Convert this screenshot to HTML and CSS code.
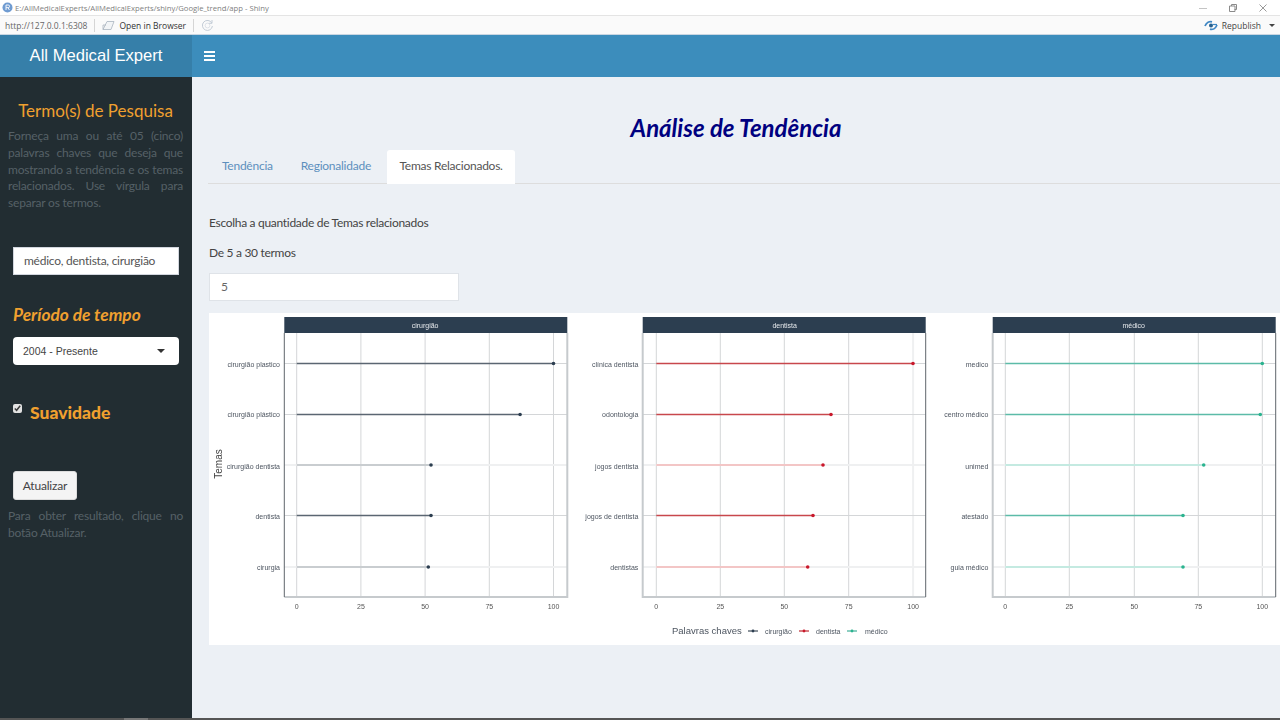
FILE: index.html
```html
<!DOCTYPE html>
<html lang="en">

<head>
    <meta charset="UTF-8">
    <title>All Medical Expert</title>
    <link rel="stylesheet" href="styles.css">
</head>

<body>
    <div class="titlebar">
        <svg class="app-icon" width="11" height="11" viewBox="0 0 11 11">
            <circle cx="5.5" cy="5.5" r="5" fill="#6f9bd1"/>
            <path d="M4 8V3h2.2a1.3 1.3 0 0 1 0 2.7H4M6 5.7 7.4 8" fill="none" stroke="#fff" stroke-width="0.9"/>
        </svg>
        <span class="window-path">E:/AllMedicalExperts/AllMedicalExperts/shiny/Google_trend/app - Shiny</span>
        <div class="window-btns">
            <svg width="10" height="10" viewBox="0 0 10 10"><path d="M1 5.5h8" stroke="#c4c4c4" fill="none"/></svg>
            <svg width="10" height="10" viewBox="0 0 10 10"><path d="M1.5 3h5.500v5.500h-5.500zM3.500 3V1.500h5v5H6.500" stroke="#8a8a8a" fill="none"/></svg>
            <svg width="10" height="10" viewBox="0 0 10 10"><path d="M1.500 1.500l7 7M8.500 1.500l-7 7" stroke="#9a9a9a" fill="none"/></svg>
        </div>
    </div>

    <div class="toolbar">
        <span class="url">http://127.0.0.1:6308</span>
        <span class="tool-sep"></span>
        <svg class="tool-icon" width="13" height="11" viewBox="0 0 13 11">
            <path d="M1 9.500h8l3-8H5z" fill="#f2f4f6" stroke="#a9b4bf" stroke-width="0.8"/>
            <path d="M1 9.500V5h3" fill="none" stroke="#a9b4bf" stroke-width="0.8"/>
        </svg>
        <span class="open-browser">Open in Browser</span>
        <span class="tool-sep"></span>
        <svg class="refresh" width="13" height="13" viewBox="0 0 13 13">
            <path d="M10.800 4a5 5 0 1 0 .6 3M11 1v3.300H7.700" fill="none" stroke="#c3ccd6" stroke-width="1"/>
            <circle cx="6.500" cy="6.500" r="2.400" fill="none" stroke="#d5dbe2" stroke-width="0.8"/>
        </svg>
        <div class="republish">
            <svg width="14" height="11" viewBox="0 0 14 11">
                <path d="M1 6C2.500 2.500 5.500 1 8 1.800" fill="none" stroke="#3f87c4" stroke-width="1.800"/>
                <path d="M13 5C11.500 8.500 8.500 10 6 9.200" fill="none" stroke="#3f87c4" stroke-width="1.800"/>
                <circle cx="7" cy="5.500" r="2" fill="#27618f"/>
                <path d="M8.500 4.500H13" stroke="#3f87c4" stroke-width="1.200"/>
            </svg>
            <span>Republish</span>
            <span class="caret"></span>
        </div>
    </div>

    <header class="main-header">
        <div class="logo">All Medical Expert</div>
        <nav class="navbar">
            <div class="burger"><span></span><span></span><span></span></div>
        </nav>
    </header>

    <div class="wrapper">
        <aside class="sidebar">
            <h3 class="side-title">Termo(s) de Pesquisa</h3>
            <p class="side-text">Forneça uma ou até 05 (cinco) palavras chaves que deseja que mostrando a tendência e os temas relacionados. Use vírgula para separar os termos.</p>
            <input class="side-input" type="text" value="médico, dentista, cirurgião">
            <h4 class="side-label">Período de tempo</h4>
            <div class="side-select">
                <span>2004 - Presente</span>
                <span class="select-caret"></span>
            </div>
            <label class="smooth">
                <input type="checkbox" checked>
                <span>Suavidade</span>
            </label>
            <button class="btn-update">Atualizar</button>
            <p class="side-text side-hint">Para obter resultado, clique no botão Atualizar.</p>
        </aside>

        <main class="content">
            <h2 class="page-title">Análise de Tendência</h2>
            <ul class="tabs">
                <li><a>Tendência</a></li>
                <li><a>Regionalidade</a></li>
                <li class="active"><a>Temas Relacionados.</a></li>
            </ul>
            <p class="field-text first">Escolha a quantidade de Temas relacionados</p>
            <p class="field-text second">De 5 a 30 termos</p>
            <input class="num-input" type="text" value="5">

            <div class="chart-box">
                <svg class="chart" width="1071" height="332" viewBox="0 0 1071 332">
                    <!-- cirurgiao -->
                    <g transform="translate(87.7 4)">
                        <rect class="strip" x="-12.400" y="0" width="283" height="16"/>
                        <text class="strip-text" x="128.400" y="11">cirurgião</text>
                        <path class="grid" d="M0 16V280M64.200 16V280M128.400 16V280M192.600 16V280M256.800 16V280"/>
                        <path class="grid" d="M-12.400 46.500H270.600M-12.400 97.500H270.600M-12.400 198.500H270.600"/>
                        <path class="grid-light" d="M-12.400 148H270.600M-12.400 250H270.600"/>
                        <path class="seg-dark" d="M0 46.500H256.800M0 97.500H223.400M0 198.500H134.300"/>
                        <path class="seg-soft soft-dark" d="M0 148H134.300M0 250H131.600"/>
                        <g class="dot-dark">
                            <circle cx="256.800" cy="46.500" r="1.800"/>
                            <circle cx="223.400" cy="97.500" r="1.800"/>
                            <circle cx="134.300" cy="148" r="1.800"/>
                            <circle cx="134.300" cy="198.500" r="1.800"/>
                            <circle cx="131.600" cy="250" r="1.800"/>
                        </g>
                        <path class="frame-light" d="M270.600 16V280H-12.400"/>
                        <path class="frame-dark" d="M-12.400 16V280"/>
                        <text class="cat" x="-16.700" y="49.500">cirurgião plastico</text>
                        <text class="cat" x="-16.700" y="100">cirurgião plástico</text>
                        <text class="cat" x="-16.700" y="151.500">cirurgião dentista</text>
                        <text class="cat" x="-16.700" y="202">dentista</text>
                        <text class="cat" x="-16.700" y="253">cirurgia</text>
                        <text class="tick" x="0" y="291.500">0</text>
                        <text class="tick" x="64.200" y="291.500">25</text>
                        <text class="tick" x="128.400" y="291.500">50</text>
                        <text class="tick" x="192.600" y="291.500">75</text>
                        <text class="tick" x="256.800" y="291.500">100</text>
                    </g>
                    <!-- dentista -->
                    <g transform="translate(447.3 4)">
                        <rect class="strip" x="-13.600" y="0" width="283" height="16"/>
                        <text class="strip-text" x="128.400" y="11">dentista</text>
                        <path class="grid" d="M0 16V280M64 16V280M128 16V280M192.400 16V280"/>
                        <path class="grid-light" d="M256.800 16V280"/>
                        <path class="grid" d="M-13.600 46.500H269.400M-13.600 97.500H269.400M-13.600 198.500H269.400"/>
                        <path class="grid-light" d="M-13.600 148H269.400M-13.600 250H269.400"/>
                        <path class="seg-red" d="M0 46.500H256.700M0 97.500H174.700M0 198.500H156.700"/>
                        <path class="seg-soft soft-red" d="M0 148H166.700M0 250H151.400"/>
                        <g class="dot-red">
                            <circle cx="256.700" cy="46.500" r="1.800"/>
                            <circle cx="174.700" cy="97.500" r="1.800"/>
                            <circle cx="166.700" cy="148" r="1.800"/>
                            <circle cx="156.700" cy="198.500" r="1.800"/>
                            <circle cx="151.400" cy="250" r="1.800"/>
                        </g>
                        <path class="frame-light" d="M-13.600 16V280H269.400"/>
                        <path class="frame-dark" d="M269.400 16V280"/>
                        <text class="cat" x="-18" y="49.500">clínica dentista</text>
                        <text class="cat" x="-18" y="100">odontologia</text>
                        <text class="cat" x="-18" y="151.500">jogos dentista</text>
                        <text class="cat" x="-18" y="202">jogos de dentista</text>
                        <text class="cat" x="-18" y="253">dentistas</text>
                        <text class="tick" x="0" y="291.500">0</text>
                        <text class="tick" x="64" y="291.500">25</text>
                        <text class="tick" x="128" y="291.500">50</text>
                        <text class="tick" x="192.400" y="291.500">75</text>
                        <text class="tick" x="256.800" y="291.500">100</text>
                    </g>
                    <!-- medico -->
                    <g transform="translate(796.3 4)">
                        <rect class="strip" x="-12.600" y="0" width="283" height="16"/>
                        <text class="strip-text" x="128.400" y="11">médico</text>
                        <path class="grid" d="M0 16V280M64 16V280M129 16V280M193 16V280M257 16V280"/>
                        <path class="grid" d="M-12.600 46.500H270.400M-12.600 97.500H270.400M-12.600 198.500H270.400"/>
                        <path class="grid-light" d="M-12.600 148H270.400M-12.600 250H270.400"/>
                        <path class="seg-teal" d="M0 46.500H257M0 97.500H255M0 198.500H177.700"/>
                        <path class="seg-soft soft-teal" d="M0 148H198.400M0 250H177.700"/>
                        <g class="dot-teal">
                            <circle cx="257" cy="46.500" r="1.800"/>
                            <circle cx="255" cy="97.500" r="1.800"/>
                            <circle cx="198.400" cy="148" r="1.800"/>
                            <circle cx="177.700" cy="198.500" r="1.800"/>
                            <circle cx="177.700" cy="250" r="1.800"/>
                        </g>
                        <path class="frame-light" d="M-12.600 16V280H270.400"/>
                        <path class="frame-dark" d="M270.400 16V280"/>
                        <text class="cat" x="-17" y="49.500">medico</text>
                        <text class="cat" x="-17" y="100">centro médico</text>
                        <text class="cat" x="-17" y="151.500">unimed</text>
                        <text class="cat" x="-17" y="202">atestado</text>
                        <text class="cat" x="-17" y="253">guia médico</text>
                        <text class="tick" x="0" y="291.500">0</text>
                        <text class="tick" x="64" y="291.500">25</text>
                        <text class="tick" x="129" y="291.500">50</text>
                        <text class="tick" x="193" y="291.500">75</text>
                        <text class="tick" x="257" y="291.500">100</text>
                    </g>
                    <!-- eixo e legenda -->
                    <text class="axis-title" transform="translate(12.500 151) rotate(-90)">Temas</text>
                    <text class="legend-title" x="463" y="321">Palavras chaves</text>
                    <path class="seg-dark" d="M539 318H549"/>
                    <circle class="dot-dark" cx="544" cy="318" r="1.400"/>
                    <text class="legend-text" x="556" y="320.500">cirurgião</text>
                    <path class="seg-red" d="M590 318H600"/>
                    <circle class="dot-red" cx="595" cy="318" r="1.400"/>
                    <text class="legend-text" x="607" y="320.500">dentista</text>
                    <path class="seg-teal" d="M638 318H648"/>
                    <circle class="dot-teal" cx="643" cy="318" r="1.400"/>
                    <text class="legend-text" x="656" y="320.500">médico</text>
                </svg>
            </div>
        </main>
    </div>

    <div class="taskbar"><span></span></div>
</body>
</html>
```

FILE: styles.css
```css
* {
    box-sizing: border-box;
}

html,
body {
    height: 100%;
}

body {
    margin: 0;
    font-family: Lato, 'Open Sans', sans-serif;
    color: #444;
    background-color: #ecf0f5;
    display: flex;
    flex-direction: column;
    overflow: hidden;
}

/* window chrome */
.titlebar {
    height: 16px;
    flex: none;
    background-color: #fff;
    border-bottom: 1px solid #e4e4e4;
    display: flex;
    align-items: center;
    padding-left: 2px;
}

.app-icon {
    margin-right: 2px;
}

.window-path {
    font-family: 'Open Sans', sans-serif;
    font-size: 7.700px;
    color: #808080;
}

.window-btns {
    margin-left: auto;
    display: flex;
    gap: 20px;
    padding-right: 12px;
}

.toolbar {
    height: 19px;
    flex: none;
    background-color: #fafafa;
    border-bottom: 1px solid #c9d6e2;
    display: flex;
    align-items: center;
    padding-left: 5px;
    font-family: 'Open Sans', sans-serif;
    font-size: 8.500px;
}

.url {
    color: #666;
}

.tool-sep {
    width: 1px;
    height: 13px;
    background-color: #d5d5d5;
    margin: 0 7px;
}

.tool-icon {
    margin-right: 4px;
}

.open-browser {
    color: #333;
}

.republish {
    margin-left: auto;
    display: flex;
    align-items: center;
    gap: 4px;
    padding-right: 5px;
    color: #444;
}

.caret {
    width: 0;
    height: 0;
    margin-left: 4px;
    border-left: 3px solid transparent;
    border-right: 3px solid transparent;
    border-top: 3px solid #444;
}

/* header */
.main-header {
    height: 42px;
    flex: none;
    display: flex;
}

.logo {
    width: 192px;
    background-color: #367fa9;
    color: #fff;
    font-family: 'Liberation Sans', sans-serif;
    font-size: 16.600px;
    line-height: 42px;
    text-align: center;
}

.navbar {
    flex: 1;
    background-color: #3c8dbc;
    display: flex;
    align-items: center;
    padding-left: 12px;
}

.burger {
    width: 11px;
    display: flex;
    flex-direction: column;
    gap: 2px;
}

.burger span {
    height: 2px;
    background-color: #fff;
}

.wrapper {
    flex: 1;
    display: flex;
    min-height: 0;
}

/* sidebar */
.sidebar {
    width: 192px;
    flex: none;
    background-color: #222d32;
    padding: 0 9px 0 8px;
}

.side-title {
    margin: 23px 0 0;
    font-size: 17px;
    font-weight: 400;
    line-height: 22px;
    color: #f0a02f;
    text-align: center;
}

.side-text {
    margin: 6px 0 0;
    font-size: 12px;
    letter-spacing: -0.200px;
    line-height: 16.800px;
    color: #566167;
    text-align: justify;
}

.side-input {
    display: block;
    width: 166px;
    height: 28px;
    margin: 35px 0 0 5px;
    padding: 0 10px;
    border: 1px solid #d2d6de;
    background-color: #fff;
    font-family: Lato, sans-serif;
    font-size: 12px;
    letter-spacing: -0.250px;
    color: #555;
}

.side-label {
    margin: 29px 0 0 5px;
    font-size: 17.300px;
    font-style: italic;
    font-weight: 700;
    line-height: 22px;
    color: #f0a02f;
}

.side-select {
    width: 166px;
    height: 28px;
    margin: 11px 0 0 5px;
    padding: 0 14px 0 10px;
    background-color: #fff;
    border-radius: 4px;
    display: flex;
    align-items: center;
    justify-content: space-between;
    font-family: 'Liberation Sans', sans-serif;
    font-size: 10.500px;
    color: #444;
}

.select-caret {
    width: 0;
    height: 0;
    border-left: 4px solid transparent;
    border-right: 4px solid transparent;
    border-top: 4px solid #333;
}

.smooth {
    display: flex;
    align-items: flex-start;
    margin: 37px 0 0 5px;
    font-size: 17.500px;
    font-weight: 900;
    line-height: 22px;
    color: #f0a02f;
}

.smooth input {
    width: 9px;
    height: 9px;
    margin: 2px 8px 0 0;
    accent-color: #e2e2e2;
}

.btn-update {
    display: block;
    width: 64px;
    height: 29px;
    margin: 47px 0 0 5px;
    padding: 0;
    border: 1px solid #ddd;
    border-radius: 3px;
    background-color: #f4f4f4;
    font-family: Lato, sans-serif;
    font-size: 12px;
    letter-spacing: -0.200px;
    color: #444;
}

.side-hint {
    margin-top: 8px;
}

/* main area */
.content {
    flex: 1;
    min-width: 0;
    position: relative;
}

.page-title {
    margin: 37px 0 0;
    font-size: 24px;
    font-style: italic;
    font-weight: 700;
    line-height: 28px;
    color: #000080;
    text-align: center;
}

.tabs {
    list-style: none;
    margin: 8px 0 0 16px;
    padding: 0;
    height: 34px;
    display: flex;
    border-bottom: 1px solid #ddd;
}

.tabs li {
    height: 34px;
    padding: 0 14px;
    line-height: 32px;
    font-size: 12px;
    letter-spacing: -0.250px;
    color: #5c8fbd;
}

.tabs li a {
    display: block;
}

.tabs li.active {
    margin-left: 2px;
    padding: 0 12.500px;
    background-color: #fff;
    border-radius: 3px 3px 0 0;
    color: #555;
}

.field-text {
    margin: 0 0 0 17px;
    font-size: 12px;
    letter-spacing: -0.300px;
    line-height: 18px;
    color: #444;
}

.first {
    margin-top: 30px;
}

.second {
    margin-top: 12px;
}

.num-input {
    display: block;
    width: 250px;
    height: 28px;
    margin: 11px 0 0 17px;
    padding: 0 11px 2px;
    border: 1px solid #dfe3e8;
    background-color: #fff;
    font-family: Lato, sans-serif;
    font-size: 12px;
    color: #666;
}

.chart-box {
    margin: 12px 0 0 17px;
    height: 332px;
    background-color: #fff;
}

.chart {
    display: block;
    font-family: 'Liberation Sans', sans-serif;
    will-change: transform;
}

.strip {
    fill: #2c3e50;
}

.strip-text {
    font-size: 7px;
    fill: #e6e9ec;
    text-anchor: middle;
}

.grid {
    fill: none;
    stroke: #d4d6d8;
    stroke-width: 1;
}

.grid-light {
    fill: none;
    stroke: #eff0f1;
    stroke-width: 2;
}

.seg-dark,
.seg-red,
.seg-teal {
    fill: none;
    stroke-width: 1.400;
}

.seg-dark {
    stroke: #5b6672;
}

.seg-red {
    stroke: #c8474c;
}

.seg-teal {
    stroke: #5cbba8;
}

.seg-soft {
    fill: none;
    stroke-width: 2;
}

.soft-dark {
    stroke: #c9cdd0;
}

.soft-red {
    stroke: #f3c6c6;
}

.soft-teal {
    stroke: #c4eae1;
}

.dot-dark {
    fill: #2c3e50;
}

.dot-red {
    fill: #c9182b;
}

.dot-teal {
    fill: #2bb38f;
}

.frame-light {
    fill: none;
    stroke: #c6cacd;
    stroke-width: 2;
}

.frame-dark {
    fill: none;
    stroke: #5f666c;
    stroke-width: 1;
}

.cat {
    font-size: 7px;
    fill: #4d5560;
    text-anchor: end;
}

.tick {
    font-size: 7px;
    fill: #555;
    text-anchor: middle;
}

.axis-title {
    font-size: 10px;
    fill: #444;
    text-anchor: middle;
}

.legend-title {
    font-size: 9.500px;
    fill: #4d5560;
}

.legend-text {
    font-size: 7px;
    fill: #4d5560;
}

.taskbar {
    height: 2px;
    flex: none;
    background-color: #555;
}

.taskbar span {
    display: block;
    width: 24px;
    height: 2px;
    margin-left: 124px;
    background-color: #777;
}
```
